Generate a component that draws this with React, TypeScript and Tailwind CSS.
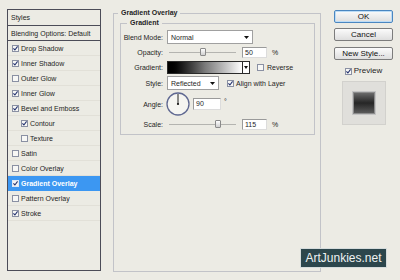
import React from "react";

const Check = ({ checked, light = false }: { checked: boolean; light?: boolean }) => (
  <span
    className={`flex items-center justify-center w-[7px] h-[7px] shrink-0 border ${
      light ? "border-[#dfe8f5] bg-[#f4f4f4]" : "border-[#8a90a3] bg-[#f7f7f5]"
    }`}
  >
    {checked && (
      <svg width="5" height="5" viewBox="0 0 5 5">
        <path d="M0.4 2.4 L1.9 4 L4.6 0.4" stroke="#24326f" strokeWidth="1.1" fill="none" />
      </svg>
    )}
  </span>
);

const items = [
  { label: "Drop Shadow", checked: true },
  { label: "Inner Shadow", checked: true },
  { label: "Outer Glow", checked: false },
  { label: "Inner Glow", checked: true },
  { label: "Bevel and Emboss", checked: true },
  { label: "Contour", checked: true, indent: true },
  { label: "Texture", checked: false, indent: true },
  { label: "Satin", checked: false },
  { label: "Color Overlay", checked: false },
  { label: "Gradient Overlay", checked: true, active: true },
  { label: "Pattern Overlay", checked: false },
  { label: "Stroke", checked: true },
];

const Arrow = () => (
  <svg width="5" height="3" viewBox="0 0 5 3">
    <path d="M0 0 H5 L2.5 3 Z" fill="#111" />
  </svg>
);

const Slider = ({ pos }: { pos: number }) => (
  <div className="relative w-[67px] h-[10px] ml-[2px] flex items-center">
    <div className="w-full h-px bg-[#b4b4b0]" />
    <div
      className="absolute top-[1px] w-[6px] h-[8px] rounded-[1px] border border-[#8a8a8a] bg-gradient-to-b from-white to-[#cfcfcf]"
      style={{ left: pos }}
    />
  </div>
);

const Label = ({ children }: { children: React.ReactNode }) => (
  <div className="w-[42px] text-right pr-0 shrink-0 mr-[4px]">{children}</div>
);

const Input = ({ value, w = "w-[25px]", h = "h-[11px]" }: { value: string; w?: string; h?: string }) => (
  <div className={`${w} ${h} border border-t-[#9a9a9a] border-l-[#9a9a9a] border-r-[#dcdcdc] border-b-[#dcdcdc] bg-white flex items-center pl-[2px]`}>
    {value}
  </div>
);

const Button = ({ children, primary = false }: { children: React.ReactNode; primary?: boolean }) => (
  <div
    className={`w-[59px] h-[13px] flex items-center justify-center rounded-[2px] border bg-gradient-to-b from-[#fbfbfb] to-[#dedede] text-[8px] text-[#111] ${
      primary ? "border-[#4a86c0] shadow-[inset_0_0_0_1px_#bcdcf6]" : "border-[#7c7c7c]"
    }`}
  >
    {children}
  </div>
);

export default function App() {
  return (
    <div className="relative w-[400px] h-[280px] overflow-hidden bg-[#ecebe4] font-['Liberation_Sans',Arial,sans-serif] text-[7px] leading-none text-[#1e1e1e] flex items-start pl-[7px]">
      {/* Left styles list */}
      <div className="mt-[9px] w-[94px] h-[262px] border border-[#4c4c58] flex flex-col">
        <div className="h-[16px] border-b border-[#4c4c58] flex items-center pl-[3px]">Styles</div>
        <div className="h-[15px] border-b border-[#4c4c58] flex items-center pl-[3px]">Blending Options: Default</div>
        {items.map((it) => (
          <div
            key={it.label}
            className={`h-[15px] border-b flex items-center gap-[2px] ${
              it.indent ? "pl-[13px]" : "pl-[4px]"
            } ${it.active ? "bg-[#3c97f2] border-[#3c97f2] text-white font-bold" : "border-[#e2e0d8]"}`}
          >
            <Check checked={it.checked} light={it.active} />
            <span>{it.label}</span>
          </div>
        ))}
      </div>

      {/* Main group */}
      <fieldset className="mt-[8px] ml-[12px] w-[208px] h-[264px] border border-[#c2c3c8] pl-[6px] pr-[5px]">
        <legend className="ml-[-2px] px-[3px] font-bold leading-[10px] text-[7px]">Gradient Overlay</legend>
        <fieldset className="w-[195px] border border-[#c2c3c8] pb-[3px]">
          <legend className="ml-[6px] px-[3px] font-bold leading-[10px] text-[7px]">Gradient</legend>
          <div className="flex flex-col">
            {/* Blend mode */}
            <div className="mt-[2px] h-[14px] flex items-center">
              <Label>Blend Mode:</Label>
              <div className="w-[86px] h-[14px] border border-[#a0a0a0] bg-white flex items-center justify-between pl-[3px] pr-[3px]">
                <span>Normal</span>
                <Arrow />
              </div>
            </div>
            {/* Opacity */}
            <div className="mt-[1px] h-[14px] flex items-center">
              <Label>Opacity:</Label>
              <Slider pos={31} />
              <div className="ml-[6px]">
                <Input value="50" />
              </div>
              <span className="ml-[5px]">%</span>
            </div>
            {/* Gradient */}
            <div className="mt-[1px] h-[14px] flex items-center">
              <Label>Gradient:</Label>
              <div className="w-[83px] h-[13px] border border-[#2a2a2a] flex">
                <div className="flex-1 bg-gradient-to-r from-black via-[#7a7a7a] to-white" />
                <div className="w-[7px] border-l border-[#2a2a2a] bg-white flex items-center justify-center">
                  <svg width="4" height="3" viewBox="0 0 4 3">
                    <path d="M0 0 H4 L2 3 Z" fill="#111" />
                  </svg>
                </div>
              </div>
              <div className="ml-[7px] flex items-center gap-[3px]">
                <Check checked={false} />
                <span>Reverse</span>
              </div>
            </div>
            {/* Style */}
            <div className="mt-[2px] h-[14px] flex items-center">
              <Label>Style:</Label>
              <div className="w-[52px] h-[14px] border border-[#a0a0a0] bg-white flex items-center justify-between pl-[3px] pr-[3px]">
                <span>Reflected</span>
                <Arrow />
              </div>
              <div className="ml-[8px] flex items-center gap-[2px]">
                <Check checked={true} />
                <span>Align with Layer</span>
              </div>
            </div>
            {/* Angle */}
            <div className="mt-[2px] h-[24px] flex items-center">
              <Label>Angle:</Label>
              <svg width="24" height="24" viewBox="0 0 24 24" className="shrink-0 -ml-[1px]">
                <circle cx="12" cy="12" r="11" fill="#f5f5f1" stroke="#5f6891" strokeWidth="1.3" />
                <line x1="12" y1="12" x2="12" y2="2" stroke="#222" strokeWidth="1" />
                <circle cx="12" cy="12" r="1.1" fill="#111" />
              </svg>
              <div className="ml-[3px] -mt-[1px]">
                <Input value="90" w="w-[28px]" h="h-[12px]" />
              </div>
              <span className="ml-[3px] self-start mt-[6px]">°</span>
            </div>
            {/* Scale */}
            <div className="mt-[1px] h-[14px] flex items-center">
              <Label>Scale:</Label>
              <Slider pos={46} />
              <div className="ml-[6px]">
                <Input value="115" />
              </div>
              <span className="ml-[5px]">%</span>
            </div>
          </div>
        </fieldset>
      </fieldset>

      {/* Right column */}
      <div className="ml-[13px] mt-[10px] w-[59px] flex flex-col items-center">
        <Button primary>OK</Button>
        <div className="mt-[5px]">
          <Button>Cancel</Button>
        </div>
        <div className="mt-[6px]">
          <Button>New Style...</Button>
        </div>
        <div className="mt-[6px] h-[10px] flex items-center gap-[2px] text-[8px]">
          <Check checked={true} />
          <span>Preview</span>
        </div>
        <div className="mt-[5px] w-[44px] h-[44px] bg-[#e0dfdb] border border-[#d2d1cd] flex items-center justify-center">
          <div className="w-[22px] h-[22px] border border-[#8c8c8c] shadow-[0_0_0_1px_#c4c4c4] bg-gradient-to-b from-[#6a6a6a] via-[#262626] to-[#5a5a5a]" />
        </div>
      </div>

      {/* Watermark */}
      <div className="absolute left-[300px] top-[248px] w-[87px] h-[20px] bg-[#2c464c] border border-[#d6dcdc] flex items-center justify-center text-[12px] text-[#eef2f2] font-normal">
        ArtJunkies.net
      </div>
    </div>
  );
}
